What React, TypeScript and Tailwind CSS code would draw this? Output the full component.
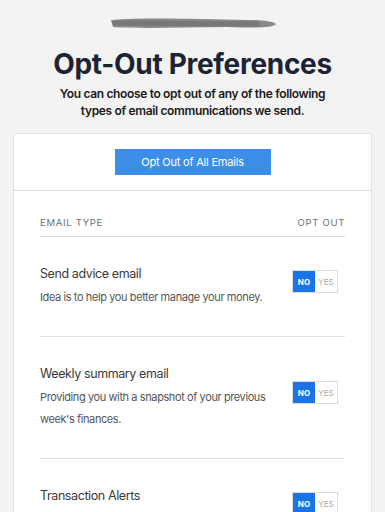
import React from "react";

type Pref = { title: string; desc: string };

const prefs: Pref[] = [
  { title: "Send advice email", desc: "Idea is to help you better manage your money." },
  { title: "Weekly summary email", desc: "Providing you with a snapshot of your previous week's finances." },
  { title: "Transaction Alerts", desc: "Get notified about activity on your accounts." },
];

const Toggle: React.FC = () => (
  <div className="mr-[7px] mb-[9px] flex h-[23px] w-[46px] shrink-0 border border-[#dcdcdc] text-[8px]">
    <span className="flex w-1/2 items-center justify-center bg-[#1a73e8] font-bold text-white">NO</span>
    <span className="flex w-1/2 items-center justify-center bg-white text-[#a8a8a8]">YES</span>
  </div>
);

const App: React.FC = () => {
  return (
    <div
      className="min-h-[512px] bg-[#f3f3f3] px-[13px] pt-[14px]"
      style={{ fontFamily: "Inter, 'Liberation Sans', sans-serif" }}
    >
      {/* redacted logo */}
      <div className="flex justify-center">
        <svg width="172" height="20" viewBox="0 0 172 20">
          <path
            d="M4 6 C40 3, 90 5, 140 6 C155 6, 165 7, 169 10 C166 14, 150 14, 120 13 C80 13, 40 15, 6 13 Z"
            fill="#888"
          />
          <path d="M8 9 L150 10" stroke="#777" strokeWidth="5" strokeLinecap="round" />
        </svg>
      </div>

      <h1 className="mt-[13px] text-center text-[28px] font-bold leading-[34px] tracking-[-0.3px] text-[#1c2333]">
        Opt-Out Preferences
      </h1>
      <p className="mx-auto mt-[4px] w-[285px] text-center text-[12px] font-semibold leading-[17px] tracking-[-0.35px] text-[#1a1a1a]">
        You can choose to opt out of any of the following types of email communications we send.
      </p>

      <div className="mt-[14px] rounded-[3px] border border-[#e2e2e2] bg-white">
        <div className="flex justify-center py-[15px]">
          <button className="h-[26px] w-[156px] bg-[#3d8ee6] text-[11px] tracking-[-0.2px] text-white">
            Opt Out of All Emails
          </button>
        </div>
        <div className="border-t border-[#d9d9d9] px-[26px]">
          <div className="flex justify-between border-b border-[#dcdcdc] pt-[25px] pb-[6px] text-[9.5px] tracking-[0.7px] text-[#6b6f78]">
            <span>EMAIL TYPE</span>
            <span>OPT OUT</span>
          </div>
          {prefs.map((p, i) => (
            <div
              key={p.title}
              className={`flex items-center justify-between pt-[27px] pb-[28px] ${
                i < prefs.length - 1 ? "border-b border-[#e0e0e0]" : ""
              }`}
            >
              <div className="w-[235px]">
                <div className="text-[12.5px] leading-[20px] tracking-[-0.4px] text-[#3a3a3a]">{p.title}</div>
                <div className="mt-[2px] text-[11px] leading-[22px] tracking-[-0.4px] text-[#555]">{p.desc}</div>
              </div>
              <Toggle />
            </div>
          ))}
        </div>
      </div>
    </div>
  );
};

export default App;
